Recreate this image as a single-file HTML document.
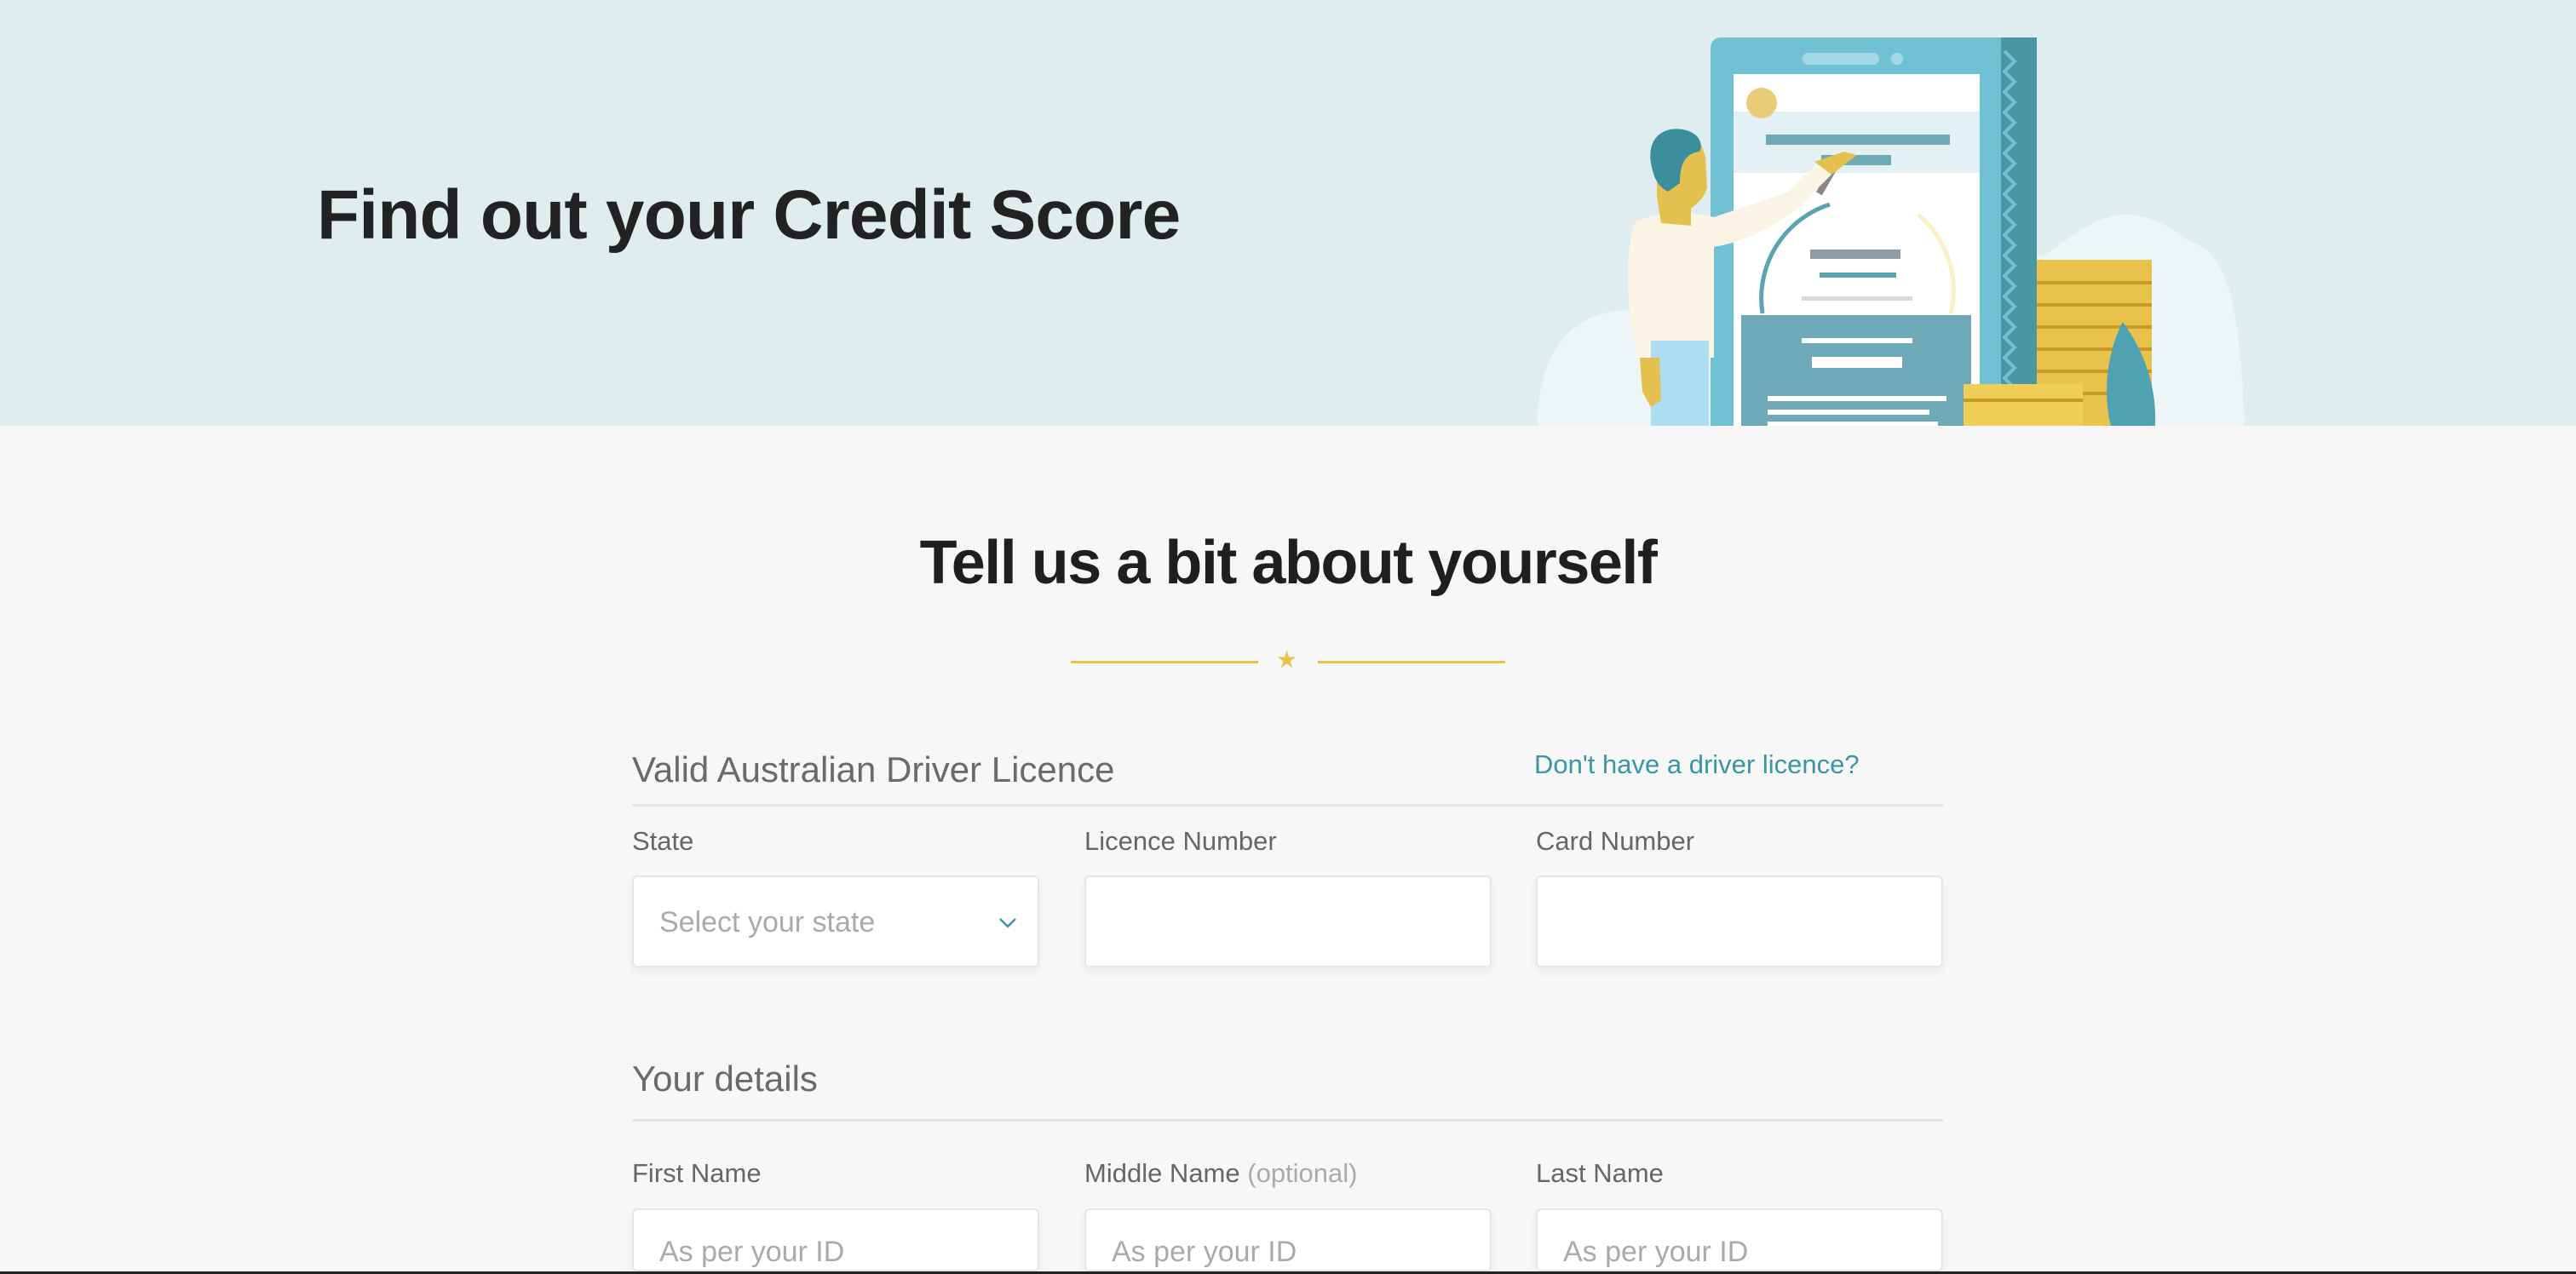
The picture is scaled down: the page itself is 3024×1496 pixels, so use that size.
<!DOCTYPE html>
<html style="overflow:hidden;height:1496px"><head><meta charset="utf-8"><style>
*{margin:0;padding:0;box-sizing:border-box}
body{width:3024px;height:1496px;overflow:hidden;background:#f7f7f7;font-family:"Liberation Sans",sans-serif;position:relative}
.hero{position:absolute;left:0;top:0;width:3024px;height:500px;background:#dfedee;overflow:hidden}
h1{position:absolute;left:372px;top:206px;font-size:82px;font-weight:bold;color:#222;letter-spacing:-0.8px;white-space:nowrap}
h2{position:absolute;left:0;width:3024px;text-align:center;top:620px;font-size:72px;font-weight:bold;color:#1f1f1f;letter-spacing:-1.5px}
.ln{position:absolute;top:776px;height:3px;background:#e9c24a}
.star{position:absolute;left:1498px;top:758px;font-size:28px;color:#e9c24a}
.sec{position:absolute;left:742px;font-size:42px;color:#6a6a6a}
.rule{position:absolute;left:742px;width:1539px;height:3px;background:#e4e4e4}
.lab{position:absolute;font-size:31px;color:#666}
.in{position:absolute;width:478px;background:#fff;border:2px solid #e6e6e6;border-radius:6px;box-shadow:0 6px 10px rgba(0,0,0,.05);overflow:hidden}
.ph{position:absolute;left:30px;font-size:34px;color:#aaa}
a{position:absolute;left:1801px;top:880px;font-size:31px;color:#3a95a5;text-decoration:none}
</style></head><body>
<div class="hero">
<h1>Find out your Credit Score</h1>
<svg width="3024" height="500" style="position:absolute;left:0;top:0">
<path d="M1805 500 C1805 420 1840 370 1900 365 L2010 360 L2400 300 C2440 270 2470 250 2500 252 C2540 255 2560 280 2575 285 C2620 300 2630 380 2635 500 Z" fill="#eef5f6"/>
<rect x="2008" y="44" width="383" height="470" rx="12" fill="#6fc1d3"/>
<rect x="2349" y="44" width="42" height="470" fill="#4a97a4"/>
<path d="M2353 60 l12 12 l-12 12 l12 12 l-12 12 l12 12 l-12 12 l12 12 l-12 12 l12 12 l-12 12 l12 12 l-12 12 l12 12 l-12 12 l12 12 l-12 12 l12 12 l-12 12 l12 12 l-12 12 l12 12 l-12 12 l12 12 l-12 12 l12 12 l-12 12 l12 12 l-12 12 l12 12 l-12 12 l12 12 l-12 12 l12 12 l-12 12 l12 12 l-12 12 l12 12" stroke="#6fc1d3" stroke-width="4" fill="none"/>
<rect x="2116" y="62" width="90" height="14" rx="7" fill="#a5d8e6"/>
<rect x="2220" y="62" width="14" height="14" rx="7" fill="#a5d8e6"/>
<rect x="2035" y="87" width="289" height="420" fill="#fff"/>
<rect x="2035" y="131" width="289" height="72" fill="#e3f1f4"/>
<circle cx="2068" cy="121" r="18" fill="#e9cc78"/>
<rect x="2073" y="158" width="216" height="12" fill="#70a9b6"/>
<rect x="2138" y="182" width="82" height="12" fill="#70a9b6"/>
<rect x="2044" y="210" width="266" height="40" fill="#fff"/>
<path d="M2069 368 A116 116 0 0 1 2148 240" stroke="#5ba3b1" stroke-width="5" fill="none"/>
<path d="M2252 252 A116 116 0 0 1 2290 368" stroke="#fbefc4" stroke-width="5" fill="none"/>
<rect x="2128" y="240" width="8" height="40" fill="#888" transform="rotate(30 2232 260)"/>
<rect x="2125" y="293" width="106" height="11" fill="#909ba3"/>
<rect x="2136" y="320" width="90" height="6" fill="#5ba3b1"/>
<rect x="2115" y="348" width="130" height="5" fill="#d4dade"/>
<rect x="2044" y="370" width="270" height="140" fill="#6da9b8"/>
<g fill="#fff"><rect x="2115" y="397" width="130" height="6"/><rect x="2127" y="419" width="106" height="13"/><rect x="2075" y="465" width="210" height="6"/><rect x="2075" y="481" width="190" height="6"/><rect x="2075" y="495" width="200" height="5"/></g>
<rect x="2391" y="305" width="135" height="200" fill="#e8c24c"/>
<g stroke="#c99a2a" stroke-width="4"><line x1="2391" x2="2526" y1="332" y2="332"/><line x1="2391" x2="2526" y1="358" y2="358"/><line x1="2391" x2="2526" y1="384" y2="384"/><line x1="2391" x2="2526" y1="410" y2="410"/><line x1="2391" x2="2526" y1="436" y2="436"/><line x1="2391" x2="2526" y1="462" y2="462"/></g>
<rect x="2305" y="451" width="140" height="50" fill="#f0cd55"/>
<line x1="2305" x2="2445" y1="470" y2="470" stroke="#c99a2a" stroke-width="4"/>
<path d="M2492 378 C2470 420 2470 470 2478 500 L2530 500 C2532 450 2515 410 2492 378Z" fill="#4fa2b2"/>
<path d="M1920 260 C1960 245 1990 250 2012 255 L2100 225 L2135 190 L2150 205 L2110 245 C2070 275 2040 285 2012 290 L2012 420 L1922 420 C1910 360 1905 300 1920 260Z" fill="#faf4e4"/>
<path d="M2130 190 L2165 178 L2180 182 L2150 205Z" fill="#e4c050"/>
<path d="M1945 230 L1945 200 C1938 180 1945 160 1965 155 C1985 150 1998 165 2002 185 L2004 220 C2000 235 1990 240 1985 245 L1985 265 L1950 262Z" fill="#e4c050"/>
<path d="M1940 200 C1930 165 1950 148 1975 152 C1995 155 2000 170 1995 178 C1980 180 1972 190 1972 215 L1958 225 C1948 220 1942 210 1940 200Z" fill="#3c8e9c"/>
<rect x="1938" y="400" width="68" height="100" fill="#aedcf0"/>
<path d="M1925 420 L1948 420 L1950 470 L1938 478 L1928 460Z" fill="#e4c050"/>
</svg>
</div>
<h2>Tell us a bit about yourself</h2>
<div class="ln" style="left:1257px;width:220px"></div>
<div class="star">★</div>
<div class="ln" style="left:1547px;width:220px"></div>

<div class="sec" style="top:880px">Valid Australian Driver Licence</div>
<a>Don't have a driver licence?</a>
<div class="rule" style="top:944px"></div>
<div class="lab" style="left:742px;top:970px">State</div>
<div class="lab" style="left:1273px;top:970px">Licence Number</div>
<div class="lab" style="left:1803px;top:970px">Card Number</div>
<div class="in" style="left:742px;top:1028px;height:108px"><span class="ph" style="top:34px">Select your state</span><svg style="position:absolute;left:428px;top:46px" width="22" height="16"><path d="M2 3 L11 12 L20 3" stroke="#3a95a5" stroke-width="2.5" fill="none"/></svg></div>
<div class="in" style="left:1273px;top:1028px;height:108px"></div>
<div class="in" style="left:1803px;top:1028px;height:108px"></div>

<div class="sec" style="top:1243px">Your details</div>
<div class="rule" style="top:1314px"></div>
<div class="lab" style="left:742px;top:1360px">First Name</div>
<div class="lab" style="left:1273px;top:1360px">Middle Name <span style="color:#aaa">(optional)</span></div>
<div class="lab" style="left:1803px;top:1360px">Last Name</div>
<div class="in" style="left:742px;top:1419px;height:74px"><span class="ph" style="top:30px">As per your ID</span></div>
<div class="in" style="left:1273px;top:1419px;height:74px"><span class="ph" style="top:30px">As per your ID</span></div>
<div class="in" style="left:1803px;top:1419px;height:74px"><span class="ph" style="top:30px">As per your ID</span></div>
<div style="position:absolute;left:0;top:1493px;width:3024px;height:3px;background:#222"></div>
</body></html>
